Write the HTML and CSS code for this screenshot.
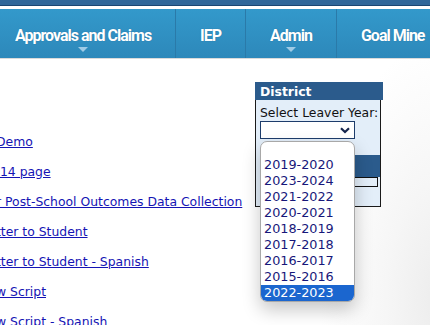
FILE: index.html
```html
<!DOCTYPE html>
<html lang="en">
<head>
    <meta charset="UTF-8">
    <title>Leaver Year</title>
    <link rel="stylesheet" href="styles.css">
</head>
<body>
    <div class="top-strip"></div>

    <nav class="navbar">
        <div class="nav-list">
            <a href="#" class="nav-item has-menu">Approvals and Claims</a>
            <a href="#" class="nav-item">IEP</a>
            <a href="#" class="nav-item has-menu">Admin</a>
            <a href="#" class="nav-item">Goal Mine</a>
        </div>
    </nav>

    <div class="page">
        <ul class="link-list">
            <li><a href="#">Demo</a></li>
            <li><a href="#">&nbsp;14 page</a></li>
            <li><a href="#">r Post-School Outcomes Data Collection</a></li>
            <li><a href="#">tter to Student</a></li>
            <li><a href="#">tter to Student - Spanish</a></li>
            <li><a href="#">w Script</a></li>
            <li><a href="#">w Script - Spanish</a></li>
        </ul>

        <div class="panel">
            <div class="panel-header">District</div>
            <div class="panel-body">
                <label class="field-label">Select Leaver Year:</label>
                <div class="select-wrap">
                    <div class="select-box">
                        <svg class="chevron" width="10" height="7" viewBox="0 0 10 7">
                            <path d="M1 1.2 L5 5 L9 1.2" fill="none" stroke="#14254d" stroke-width="2.2"/>
                        </svg>
                    </div>
                    <ul class="dropdown">
                        <li class="empty"></li>
                        <li>2019-2020</li>
                        <li>2023-2024</li>
                        <li>2021-2022</li>
                        <li>2020-2021</li>
                        <li>2018-2019</li>
                        <li>2017-2018</li>
                        <li>2016-2017</li>
                        <li>2015-2016</li>
                        <li class="selected">2022-2023</li>
                    </ul>
                </div>
                <div class="sub-header"></div>
                <div class="sub-box"></div>
            </div>
        </div>
    </div>
</body>
</html>
```

FILE: styles.css
```css
* {
    margin: 0;
    padding: 0;
    box-sizing: border-box;
}

body {
    width: 430px;
    height: 325px;
    overflow: hidden;
    font-family: "DejaVu Sans", Verdana, sans-serif;
    font-size: 12.4px;
    background: radial-gradient(ellipse 120px 260px at 440px 300px, #ececec 0%, #f6f6f6 45%, #ffffff 100%);
}

/* Top strip */
.top-strip {
    height: 6px;
    background: #30679a;
    border-bottom: 1px solid #1b4673;
    margin-bottom: 3px;
}

/* Navigation */
.navbar {
    height: 50px;
    background: linear-gradient(#3399cb, #2d88ba);
    border-bottom: 1px solid #dadada;
    overflow: hidden;
}

.nav-list {
    display: flex;
    height: 100%;
    margin-left: -9px;
}

.nav-item {
    position: relative;
    display: flex;
    align-items: center;
    padding: 3px 24px 0;
    border-right: 1px solid #2a7aa9;
    color: #fff;
    text-decoration: none;
    white-space: nowrap;
    font-family: Roboto, "DejaVu Sans Condensed", sans-serif;
    font-weight: bold;
    font-size: 16px;
    letter-spacing: -1px;
    text-shadow: 0 0 1px rgba(0, 40, 80, 0.4);
}

.nav-item.has-menu::after {
    content: "";
    position: absolute;
    left: 50%;
    bottom: 6px;
    margin-left: -5px;
    border-left: 5px solid transparent;
    border-right: 5px solid transparent;
    border-top: 5px solid #9fcbe6;
}

/* Page body */
.page {
    display: flex;
    align-items: flex-start;
}

.link-list {
    flex: 1;
    list-style: none;
    margin-top: 75px;
    margin-left: -4px;
    display: flex;
    flex-direction: column;
    gap: 14px;
    white-space: nowrap;
}

.link-list li {
    line-height: 16px;
}

.link-list a {
    color: #1414b4;
}

/* District panel */
.panel {
    width: 128px;
    margin-top: 23px;
    margin-right: 47px;
}

.panel-header {
    height: 18px;
    padding-left: 5px;
    background: #2b5b8c;
    color: #fff;
    font-weight: bold;
    line-height: 19px;
}

.panel-body {
    height: 107px;
    margin-right: 2px;
    padding: 5px 0 0 4px;
    background: #e3eef9;
    border: 1px solid #1a1a1a;
    border-top: none;
}

.field-label {
    display: block;
    color: #111;
    line-height: 16px;
    white-space: nowrap;
}

.select-wrap {
    position: relative;
    width: 95px;
}

.select-box {
    height: 18px;
    background: #fff;
    border: 1px solid #1d3c6b;
    display: flex;
    justify-content: flex-end;
    align-items: center;
    padding-right: 4px;
}

.dropdown {
    position: absolute;
    top: 20px;
    left: 0;
    width: 95px;
    list-style: none;
    background: #fff;
    border: 1px solid #a8a8a8;
    border-radius: 7px;
    box-shadow: 0 8px 18px rgba(0, 0, 0, 0.22);
    overflow: hidden;
    z-index: 5;
}

.dropdown li {
    height: 16px;
    line-height: 16px;
    padding-left: 3px;
    color: #17177a;
    font-size: 12.8px;
}

.dropdown li.empty {
    height: 15px;
}

.dropdown li.selected {
    background: #1b66cf;
    color: #fff;
}

.sub-header {
    margin-top: 16px;
    height: 22px;
    background: #2b5b8c;
}

.sub-box {
    height: 10px;
    margin-right: 2px;
    border: 1px solid #111;
    background: #e3eef9;
}
```
